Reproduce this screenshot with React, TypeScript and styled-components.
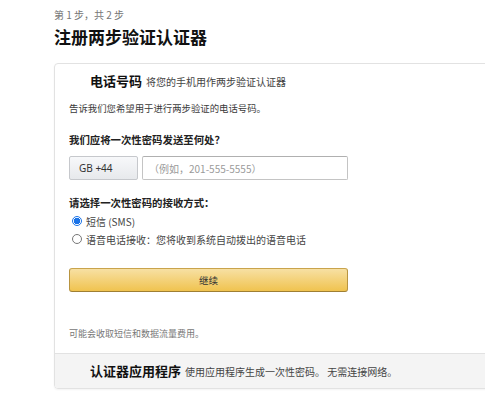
import styled, { createGlobalStyle } from 'styled-components';

const GlobalStyle = createGlobalStyle`
  html, body {
    margin: 0;
    padding: 0;
    background: #ffffff;
  }
  body {
    font-family: "Noto Sans CJK SC", "Noto Sans", "Liberation Sans", sans-serif;
    color: #333333;
  }
`;

const Page = styled.div`
  width: 485px;
  height: 403px;
  overflow: hidden;
  padding: 8px 0 0 54px;
  box-sizing: border-box;
`;

const StepLabel = styled.div`
  font-size: 10px;
  line-height: 14px;
  color: #767676;
`;

const Title = styled.h1`
  margin: 4px 0 0;
  font-size: 17px;
  line-height: 21px;
  font-weight: 700;
  color: #111111;
`;

const Card = styled.div`
  margin-top: 16px;
  width: 470px;
  border: 1px solid #e2e2e2;
  border-radius: 4px;
  box-shadow: 0 1px 2px rgba(0, 0, 0, 0.05);
  overflow: hidden;
`;

const SectionHeader = styled.div<{ $muted?: boolean }>`
  display: flex;
  align-items: baseline;
  gap: 4px;
  padding: ${(p) => (p.$muted ? '9px 0 8px 35px' : '9px 0 0 35px')};
  background: ${(p) => (p.$muted ? '#f4f4f4' : 'transparent')};
  border-top: ${(p) => (p.$muted ? '1px solid #e2e2e2' : 'none')};
`;

const SectionName = styled.span`
  font-size: 13px;
  line-height: 16px;
  font-weight: 700;
  color: #111111;
`;

const SectionHint = styled.span`
  font-size: 10px;
  line-height: 16px;
  color: #444444;
`;

const Body = styled.div`
  padding: 0 14px 12px 14px;
`;

const Text = styled.p<{ $top: number; $strong?: boolean; $small?: boolean }>`
  margin: ${(p) => p.$top}px 0 0;
  font-size: ${(p) => (p.$small ? '9px' : p.$strong ? '10.4px' : '9.4px')};
  line-height: 14px;
  font-weight: ${(p) => (p.$strong ? 700 : 400)};
  color: ${(p) => (p.$small ? '#777777' : p.$strong ? '#222222' : '#3a3a3a')};
`;

const PhoneRow = styled.div`
  display: flex;
  gap: 4px;
  margin-top: 9px;
  height: 24px;
`;

const CountryBox = styled.div`
  width: 69px;
  box-sizing: border-box;
  display: flex;
  align-items: center;
  padding-left: 9px;
  font-size: 10px;
  color: #333333;
  background: linear-gradient(#f7f8fa, #e7e9ec);
  border: 1px solid #c6c8cc;
  border-radius: 2px;
  font-family: "Noto Sans", "Liberation Sans", sans-serif;
`;

const PhoneInput = styled.div`
  width: 206px;
  box-sizing: border-box;
  display: flex;
  align-items: center;
  padding-left: 6px;
  font-size: 10px;
  color: #9a9a9a;
  background: #ffffff;
  border: 1px solid #c4c4c4;
  border-top-color: #b0b0b0;
  border-radius: 2px;
`;

const RadioList = styled.div`
  display: flex;
  flex-direction: column;
  margin-top: 2px;
`;

const RadioRow = styled.label`
  display: flex;
  align-items: center;
  gap: 4px;
  height: 18px;
  font-size: 10px;
  color: #444444;
`;

const RadioDot = styled.span<{ $checked?: boolean }>`
  width: 10px;
  height: 10px;
  box-sizing: border-box;
  border-radius: 50%;
  margin-left: 3px;
  border: ${(p) => (p.$checked ? '1px solid #1a73e8' : '1px solid #777777')};
  background: ${(p) => (p.$checked ? 'radial-gradient(circle, #1a73e8 0 3px, #ffffff 3.5px)' : '#ffffff')};
`;

const ContinueButton = styled.button`
  display: block;
  margin-top: 20px;
  width: 279px;
  height: 24px;
  padding: 0;
  border: 1px solid #b89440;
  border-color: #c9a44c #b89440 #9f7f33;
  border-radius: 3px;
  background: linear-gradient(#f7e0a3, #f0c34f);
  font-family: inherit;
  font-size: 9.5px;
  color: #333333;
`;

export default function App() {
  return (
    <>
      <GlobalStyle />
      <Page>
        <StepLabel>第 1 步，共 2 步</StepLabel>
        <Title>注册两步验证认证器</Title>
        <Card>
          <SectionHeader>
            <SectionName>电话号码</SectionName>
            <SectionHint>将您的手机用作两步验证认证器</SectionHint>
          </SectionHeader>
          <Body>
            <Text $top={11}>告诉我们您希望用于进行两步验证的电话号码。</Text>
            <Text $top={18} $strong>我们应将一次性密码发送至何处？</Text>
            <PhoneRow>
              <CountryBox>GB +44</CountryBox>
              <PhoneInput>（例如，201-555-5555）</PhoneInput>
            </PhoneRow>
            <Text $top={16} $strong>请选择一次性密码的接收方式：</Text>
            <RadioList>
              <RadioRow>
                <RadioDot $checked />
                短信 (SMS)
              </RadioRow>
              <RadioRow>
                <RadioDot />
                语音电话接收：您将收到系统自动拨出的语音电话
              </RadioRow>
            </RadioList>
            <ContinueButton>继续</ContinueButton>
            <Text $top={35} $small>可能会收取短信和数据流量费用。</Text>
          </Body>
          <SectionHeader $muted>
            <SectionName>认证器应用程序</SectionName>
            <SectionHint>使用应用程序生成一次性密码。 无需连接网络。</SectionHint>
          </SectionHeader>
        </Card>
      </Page>
    </>
  );
}
